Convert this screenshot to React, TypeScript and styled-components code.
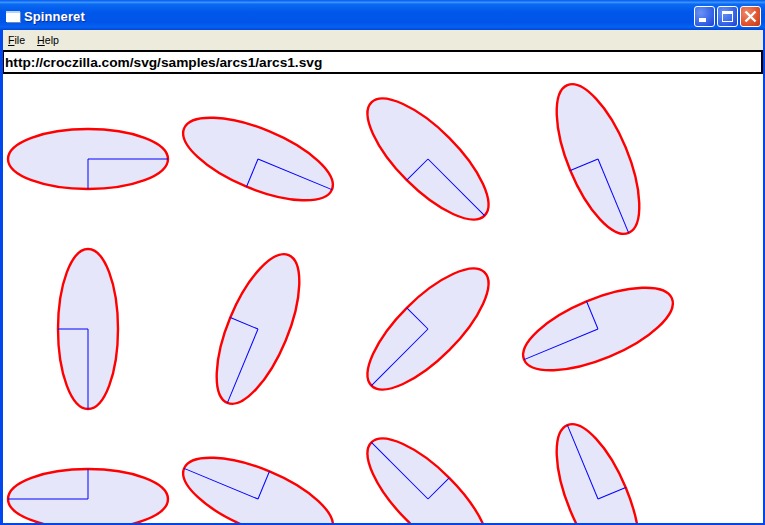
import React, { FC } from 'react';
import styled, { createGlobalStyle } from 'styled-components';

const GlobalStyle = createGlobalStyle`
  html, body {
    margin: 0;
    padding: 0;
    overflow: hidden;
    background: #ffffff;
  }
`;

const Window = styled.div`
  width: 765px;
  height: 525px;
  display: flex;
  flex-direction: column;
  overflow: hidden;
`;

const TitleBar = styled.div`
  height: 30px;
  flex: none;
  display: flex;
  align-items: center;
  padding: 3px 4px 0 6px;
  box-sizing: border-box;
  background: linear-gradient(
    180deg,
    #0058ee 0%,
    #3a93ff 8%,
    #0a6af2 14%,
    #0057ea 40%,
    #0055e8 75%,
    #0661f2 90%,
    #0047d8 100%
  );
`;

const AppIcon = styled.div`
  width: 14px;
  height: 9px;
  margin-right: 4px;
  background: #ffffff;
  border-top: 2px solid #b9d2f8;
  box-shadow: 1px 1px 0 #6f86b8;
`;

const Title = styled.div`
  flex: 1;
  color: #ffffff;
  font: bold 13px 'Liberation Sans', Arial, sans-serif;
  letter-spacing: 0.1px;
  text-shadow: 1px 1px 0 #0f2f9a;
`;

const Controls = styled.div`
  display: flex;
  gap: 2px;
`;

const ControlButton = styled.div<{ $close?: boolean }>`
  width: 21px;
  height: 21px;
  box-sizing: border-box;
  border: 1px solid #ffffff;
  border-radius: 3px;
  display: flex;
  align-items: center;
  justify-content: center;
  background: ${({ $close }) =>
    $close
      ? 'radial-gradient(circle at 30% 30%, #ee8a6c 0%, #e2552f 55%, #c23a18 100%)'
      : 'radial-gradient(circle at 30% 30%, #6a92f4 0%, #3a68e8 55%, #2040d0 100%)'};
`;

const Body = styled.div`
  flex: 1;
  min-height: 0;
  display: flex;
  flex-direction: column;
  border: solid #0047f0;
  border-width: 0 2px 2px 3px;
`;

const MenuBar = styled.div`
  height: 20px;
  flex: none;
  display: flex;
  align-items: center;
  gap: 12px;
  padding: 0 5px;
  background: #ecebdc;
  font: 10.6px 'Liberation Sans', Arial, sans-serif;
  color: #000000;
`;

const MenuInitial = styled.span`
  text-decoration: underline;
`;

const AddressBar = styled.div`
  height: 24px;
  flex: none;
  box-sizing: border-box;
  border: 2px solid #000000;
  border-left-width: 1px;
  display: flex;
  align-items: center;
  padding-left: 1px;
  background: #ffffff;
  font: bold 13.7px 'Liberation Sans', Arial, sans-serif;
  color: #000000;
`;

const Canvas = styled.svg`
  flex: 1;
  min-height: 0;
  display: block;
  background: #ffffff;
`;

const COLS = [85, 255, 425, 595];
const ROWS = [85, 255, 425];

const Spinner: FC<{ x: number; y: number; angle: number }> = ({ x, y, angle }) => (
  <g transform={`translate(${x} ${y}) rotate(${angle})`}>
    <ellipse cx="0" cy="0" rx="80" ry="30" fill="#e6e6fa" stroke="#ff0000" strokeWidth="2.4" />
    <path d="M0 0H80" fill="none" stroke="#0000ff" strokeWidth="1" />
    <path d="M0 0V30" fill="none" stroke="#0000ff" strokeWidth="1" />
  </g>
);

const App: FC = () => (
  <>
    <GlobalStyle />
    <Window>
      <TitleBar>
        <AppIcon />
        <Title>Spinneret</Title>
        <Controls>
          <ControlButton>
            <svg width="19" height="19" viewBox="0 0 19 19">
              <rect x="4" y="11" width="7" height="4" fill="#ffffff" />
            </svg>
          </ControlButton>
          <ControlButton>
            <svg width="19" height="19" viewBox="0 0 19 19">
              <rect x="4.5" y="4.5" width="10" height="10" fill="none" stroke="#ffffff" />
              <rect x="4" y="4" width="11" height="3" fill="#ffffff" />
            </svg>
          </ControlButton>
          <ControlButton $close>
            <svg width="19" height="19" viewBox="0 0 19 19">
              <path d="M4.5 4.5L14.5 14.5M14.5 4.5L4.5 14.5" fill="none" stroke="#ffffff" strokeWidth="2.4" />
            </svg>
          </ControlButton>
        </Controls>
      </TitleBar>
      <Body>
        <MenuBar>
          <span>
            <MenuInitial>F</MenuInitial>ile
          </span>
          <span>
            <MenuInitial>H</MenuInitial>elp
          </span>
        </MenuBar>
        <AddressBar>http://croczilla.com/svg/samples/arcs1/arcs1.svg</AddressBar>
        <Canvas>
          {ROWS.map((y, row) =>
            COLS.map((x, col) => (
              <Spinner key={`${row}-${col}`} x={x} y={y} angle={(row * 4 + col) * 22.5} />
            )),
          )}
        </Canvas>
      </Body>
    </Window>
  </>
);

export default App;
